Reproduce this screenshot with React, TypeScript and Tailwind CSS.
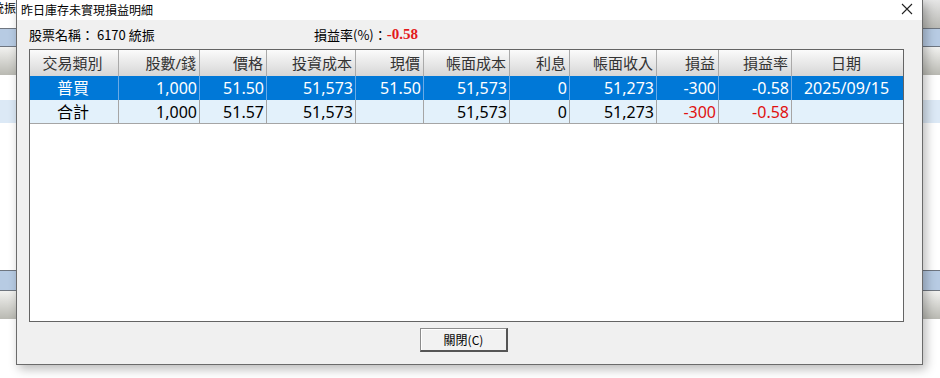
import React from "react";

const cols = "grid grid-cols-[89px_81px_67px_89px_68px_86px_60px_87px_62px_73px_1fr]";

const headers = ["交易類別", "股數/錢", "價格", "投資成本", "現價", "帳面成本", "利息", "帳面收入", "損益", "損益率", "日期"];
const center = [true, false, false, false, false, false, false, false, false, false, true];

const rows = [
  {
    cells: ["普買", "1,000", "51.50", "51,573", "51.50", "51,573", "0", "51,273", "-300", "-0.58", "2025/09/15"],
    selected: true,
  },
  {
    cells: ["合計", "1,000", "51.57", "51,573", "", "51,573", "0", "51,273", "-300", "-0.58", ""],
    selected: false,
  },
];

function Strip({ left }: { left?: boolean }) {
  return (
    <div className="flex h-full flex-col overflow-hidden">
      {left ? (
        <div className="flex h-[28px] shrink-0 justify-end bg-white pt-[1px] text-[12px] leading-[14px] text-black [font-family:'Noto_Sans_CJK_TC',sans-serif]">
          <span className="whitespace-nowrap">統振</span>
        </div>
      ) : (
        <div className="h-[28px] shrink-0 bg-gradient-to-b from-[#e6e6e6] to-[#b9b9b4]" />
      )}
      <div className="h-[19px] shrink-0 border-y border-[#6f7680] bg-[#b7cbe3]" />
      <div className="h-[28px] shrink-0 bg-gradient-to-b from-[#f2f2f0] to-[#b9b9b2]" />
      <div className="h-[25px] shrink-0 bg-white" />
      <div className="h-[23px] shrink-0 bg-[#dce9f6]" />
      <div className="h-[147px] shrink-0 bg-white" />
      <div className="h-[21px] shrink-0 border-y border-[#6f7680] bg-[#b7cbe3]" />
      <div className="h-[28px] shrink-0 bg-gradient-to-b from-[#f2f2f0] to-[#b9b9b2]" />
      <div className="flex-1 bg-white" />
    </div>
  );
}

export default function App() {
  return (
    <div className="flex h-[378px] w-[940px] overflow-hidden bg-white [font-family:'Noto_Sans','Noto_Sans_CJK_TC',sans-serif]">
      <div className="w-[16px] shrink-0">
        <Strip left />
      </div>

      <div className="relative z-10 flex h-[365px] w-[907px] shrink-0 flex-col border-x border-b border-[#6b6b6b] shadow-[3px_4px_10px_rgba(0,0,0,0.28)]">
        <div className="flex h-[20px] shrink-0 items-center justify-between bg-white pl-[4px] pr-[9px]">
          <span className="text-[12px] leading-none text-black [font-family:'Noto_Sans_CJK_TC',sans-serif]">昨日庫存未實現損益明細</span>
          <svg width="12" height="12" viewBox="0 0 12 12" className="mt-[-2px]">
            <path d="M1 1 L11 11 M11 1 L1 11" stroke="#222" strokeWidth="1.1" />
          </svg>
        </div>

        <div className="flex flex-1 flex-col bg-[#f0f0f0] pl-[12px]">
          <div className="flex h-[29px] shrink-0 items-center text-[13px] text-black [font-family:'Noto_Sans_CJK_TC',sans-serif]">
            <span className="w-[285px]">股票名稱： 6170 統振</span>
            <span>損益率(%)：</span>
            <span className="text-[15px] font-bold text-[#e3191c] [font-family:'Liberation_Serif',serif]">-0.58</span>
          </div>

          <div className="flex h-[273px] w-[875px] shrink-0 flex-col border border-[#646464] bg-white">
            <div className={`${cols} h-[26px] shrink-0 bg-gradient-to-b from-[#fbfbfb] to-[#d6d6d6] text-[15px] text-[#333]`}>
              {headers.map((h, i) => (
                <div
                  key={h}
                  className={`flex items-center border-[#a9a9a9] pr-[3px] ${i < 10 ? "border-r" : ""} ${center[i] ? "justify-center" : "justify-end"}`}
                >
                  {h}
                </div>
              ))}
            </div>
            {rows.map((r, ri) => (
              <div
                key={ri}
                className={`${cols} h-[24px] shrink-0 border-b text-[16px] ${
                  r.selected ? "border-[#0078d7] bg-[#0078d7] text-white" : "border-[#a5a5a5] bg-[#e3f1fb] text-black"
                }`}
              >
                {r.cells.map((c, i) => (
                  <div
                    key={i}
                    className={`flex items-center pr-[2px] ${i < 10 ? "border-r" : ""} ${
                      r.selected ? "border-[#6aaae6]" : "border-[#a5a5a5]"
                    } ${center[i] ? "justify-center" : "justify-end"} ${
                      !r.selected && (i === 8 || i === 9) ? "text-[#e01010]" : ""
                    }`}
                  >
                    {c}
                  </div>
                ))}
              </div>
            ))}
          </div>

          <div className="flex w-[875px] justify-center pr-[5px] pt-[6px]">
            <button
              type="button"
              className="h-[24px] w-[88px] border border-[#8c8c8c] border-b-2 border-r-2 border-b-[#555] border-r-[#555] bg-[#f2f2f2] text-[12px] text-black shadow-[inset_1px_1px_0_#fff] [font-family:'Noto_Sans_CJK_TC',sans-serif]"
            >
              關閉(C)
            </button>
          </div>
        </div>
      </div>

      <div className="flex-1">
        <Strip />
      </div>
    </div>
  );
}
